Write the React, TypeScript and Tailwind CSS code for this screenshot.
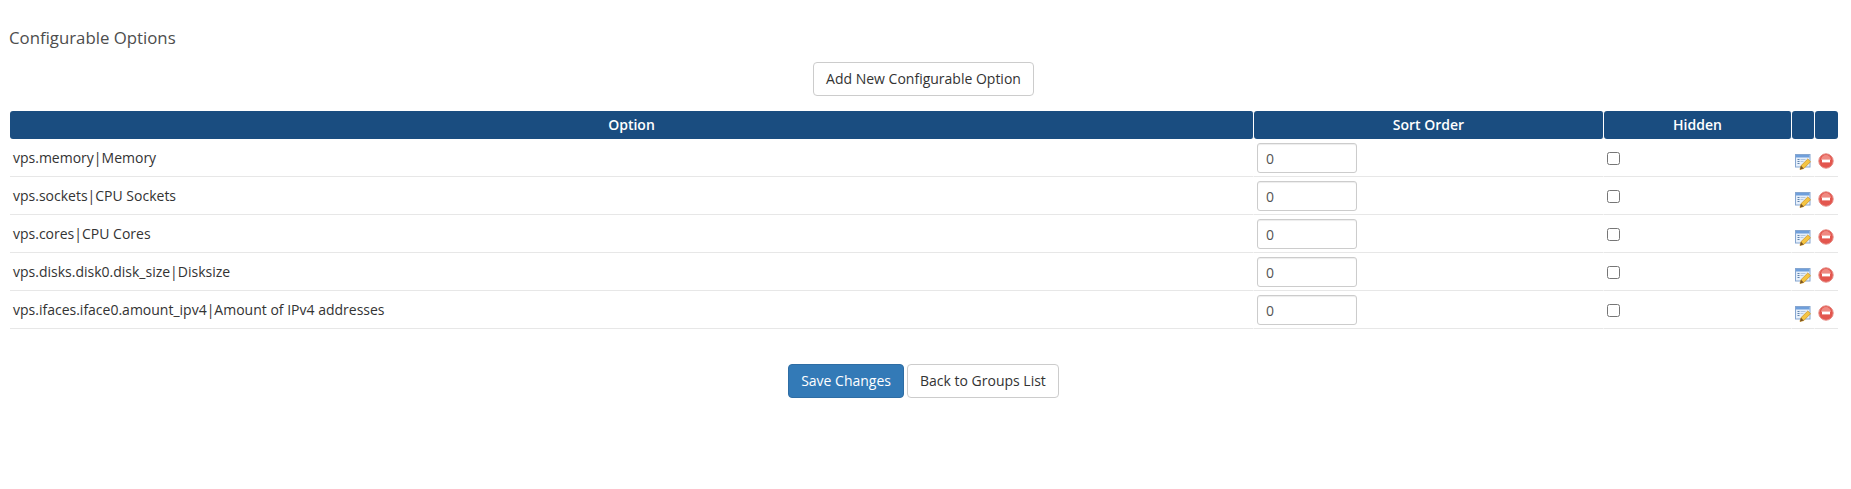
const rows = [
  'vps.memory|Memory',
  'vps.sockets|CPU Sockets',
  'vps.cores|CPU Cores',
  'vps.disks.disk0.disk_size|Disksize',
  'vps.ifaces.iface0.amount_ipv4|Amount of IPv4 addresses',
];

function EditIcon() {
  return (
    <svg width="16" height="16" viewBox="0 0 16 16" className="block">
      <rect x="0.5" y="0.5" width="14.5" height="12.5" fill="#e6effa" stroke="#86a6d0" />
      <rect x="1" y="1" width="13.5" height="2.5" fill="#6f9fdb" />
      <path d="M2.5 5.5h2M2.5 7.5h2M2.5 9.5h2" stroke="#5f83ad" strokeWidth="1" />
      <path d="M5.5 5.5h5M5.5 7.5h3" stroke="#b3c6dd" strokeWidth="1" />
      <path d="M5 15.5l1-3.8 6.8-6.7 2.7 2.7-6.7 6.8z" fill="#f5c542" stroke="#cf9526" strokeWidth="0.8" />
      <path d="M5 15.5l1-3.8 2.8 2.8z" fill="#7a5526" />
    </svg>
  );
}

function DeleteIcon() {
  return (
    <svg width="16" height="16" viewBox="0 0 16 16" className="block">
      <circle cx="8" cy="8" r="7.2" fill="#e3564e" stroke="#e58a83" strokeWidth="1" />
      <path d="M3 7a5 5 0 0 1 10 0z" fill="#ef8a82" />
      <rect x="4" y="6.6" width="8" height="2.8" fill="#ffffff" />
    </svg>
  );
}

export default function App() {
  return (
    <div className="min-h-[489px] bg-white pt-7 pr-[14px] pl-[10px] font-['Open_Sans',sans-serif] text-sm text-[#333333]">
      <h2 className="-ml-px text-[16.8px] leading-[20px] font-normal text-[#4d4d4d]">Configurable Options</h2>

      <div className="mt-[14px] flex justify-center">
        <button className="h-[34px] rounded border border-[#cccccc] bg-white px-3 leading-5">
          Add New Configurable Option
        </button>
      </div>

      <table className="mt-[15px] w-[1828px] table-fixed border-separate border-spacing-0">
        <thead>
          <tr className="h-[28px] text-white">
            <th className="w-[1244px] rounded-[3px] border-r border-white bg-[#1a4d80] font-semibold">Option</th>
            <th className="w-[350px] rounded-[3px] border-r border-white bg-[#1a4d80] font-semibold">Sort Order</th>
            <th className="w-[188px] rounded-[3px] border-r border-white bg-[#1a4d80] font-semibold">Hidden</th>
            <th className="w-[23px] rounded-[3px] border-r border-white bg-[#1a4d80]"></th>
            <th className="rounded-[3px] bg-[#1a4d80]"></th>
          </tr>
        </thead>
        <tbody>
          {rows.map((name) => (
            <tr key={name} className="h-[38px]">
              <td className="border-r border-b border-r-white border-b-[#e7e7e7] px-[3px] pt-px align-middle">{name}</td>
              <td className="border-r border-b border-r-white border-b-[#e7e7e7] px-[3px] pt-[4px] pb-[3px] align-top">
                <input
                  type="text"
                  defaultValue="0"
                  className="block h-[30px] w-[100px] rounded-[3px] border border-[#cccccc] px-2 text-[#555555] shadow-[inset_0_1px_1px_rgba(0,0,0,0.075)]"
                />
              </td>
              <td className="border-r border-b border-r-white border-b-[#e7e7e7] px-[3px] pt-[2px] align-middle">
                <input type="checkbox" className="block h-[13px] w-[13px]" />
              </td>
              <td className="border-r border-b border-r-white border-b-[#e7e7e7] pt-[15px] pl-[3px] align-top">
                <EditIcon />
              </td>
              <td className="border-b border-[#e7e7e7] pt-[14px] pl-[3px] align-top">
                <DeleteIcon />
              </td>
            </tr>
          ))}
        </tbody>
      </table>

      <div className="mt-[35px] flex justify-center gap-[3px]">
        <button className="h-[34px] rounded border border-[#2e6da4] bg-[#337ab7] px-3 text-white">Save Changes</button>
        <button className="h-[34px] rounded border border-[#cccccc] bg-white px-3">Back to Groups List</button>
      </div>
    </div>
  );
}
